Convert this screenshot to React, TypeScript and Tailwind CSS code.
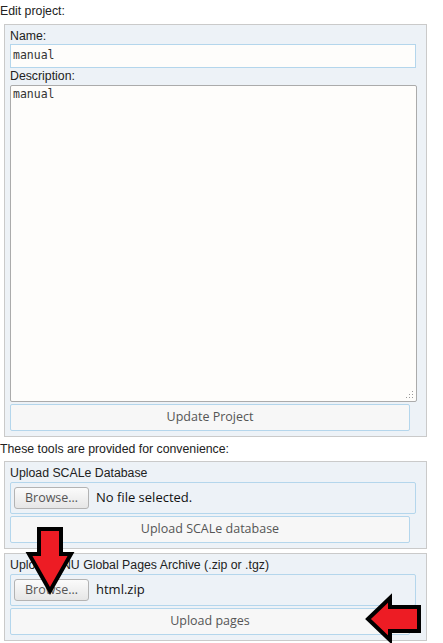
const sans = { fontFamily: '"Liberation Sans", Arial, sans-serif' };

function FileRow({ file }: { file: string }) {
  return (
    <div className="flex h-[32px] items-center gap-[7px] rounded-[2px] border border-[#b4d6ec] bg-[#edf2f7] px-[3px]">
      <button className="h-[22px] w-[75px] rounded-[3px] border border-[#b3b3b3] bg-gradient-to-b from-[#fbfbfb] to-[#e6e6e6] font-['Open_Sans',sans-serif] text-[12.5px] leading-none text-[#555]">
        Browse…
      </button>
      <span className="font-['Open_Sans',sans-serif] text-[13px] text-[#111]">{file}</span>
    </div>
  );
}

function ActionButton({ label }: { label: string }) {
  return (
    <button className="mt-[2px] h-[27px] w-[400px] rounded-[2px] border border-[#b4d6ec] bg-[#f7f7f7] font-['Open_Sans',sans-serif] text-[12.5px] text-[#555]">
      {label}
    </button>
  );
}

function UploadPanel({ title, file, action }: { title: string; file: string; action: string }) {
  return (
    <div className="ml-[4px] w-[423px] border border-[#cacaca] bg-[#edf2f7] pb-[5px] pl-[5px] pr-[10px]">
      <div className="pt-[4px] pb-[2px] leading-[14px] text-[#222]">{title}</div>
      <FileRow file={file} />
      <ActionButton label={action} />
    </div>
  );
}

export default function App() {
  return (
    <div className="relative h-[643px] w-[443px] bg-white text-[12.3px] text-[#222]" style={sans}>
      <div className="h-[24px] pt-[4px] leading-[14px]">Edit project:</div>

      <div className="ml-[4px] w-[423px] border border-[#cacaca] bg-[#edf2f7] pb-[5px] pl-[5px] pr-[10px]">
        <div className="h-[19px] pt-[4px] leading-[14px]">Name:</div>
        <div className="flex h-[24px] w-[406px] items-center border border-[#b4d6ec] bg-[#fefdfb] px-[2px] font-['DejaVu_Sans_Mono',monospace] text-[11.5px] text-[#333]">
          manual
        </div>
        <div className="h-[17px] pt-[1px] leading-[14px]">Description:</div>
        <div className="relative h-[317px] w-[407px] rounded-[2px] border border-[#ababab] bg-[#fefdfb] px-[2px] pt-[1px] font-['DejaVu_Sans_Mono',monospace] text-[11.5px] leading-[14px] text-[#333]">
          manual
          <svg className="absolute bottom-[2px] right-[2px]" width="10" height="10" viewBox="0 0 10 10">
            {[
              [8, 2],
              [8, 5],
              [5, 5],
              [8, 8],
              [5, 8],
              [2, 8],
            ].map(([x, y]) => (
              <rect key={`${x}-${y}`} x={x} y={y} width="1" height="1" fill="#9a9a9a" />
            ))}
          </svg>
        </div>
        <ActionButton label="Update Project" />
      </div>

      <div className="h-[24px] pt-[5px] leading-[14px]">These tools are provided for convenience:</div>

      <UploadPanel title="Upload SCALe Database" file="No file selected." action="Upload SCALe database" />
      <div className="h-[4px]" />
      <UploadPanel title="Upload GNU Global Pages Archive (.zip or .tgz)" file="html.zip" action="Upload pages" />

      {/* red callout arrows drawn over the form */}
      <svg className="pointer-events-none absolute left-0 top-0" width="443" height="643">
        <polygon
          points="39,529 61,529 61,554 71,554 50,591 29,554 39,554"
          fill="#ed1c24"
          stroke="#000"
          strokeWidth="4"
          strokeLinejoin="miter"
        />
        <polygon
          points="368,619 390,598 390,607 419,607 419,631 390,631 390,640"
          fill="#ed1c24"
          stroke="#000"
          strokeWidth="4"
          strokeLinejoin="miter"
        />
      </svg>
    </div>
  );
}
